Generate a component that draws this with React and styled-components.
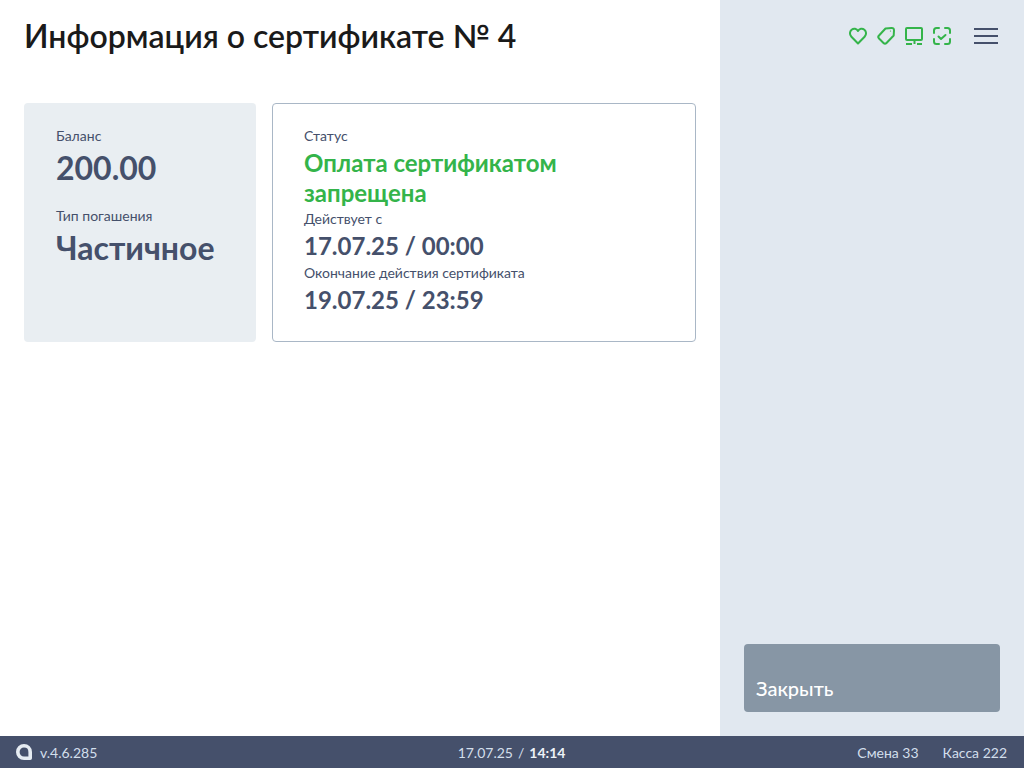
import React from "react";
import styled, { createGlobalStyle } from "styled-components";

const GlobalStyle = createGlobalStyle`
  html, body {
    margin: 0;
    padding: 0;
    height: 100%;
    background: #fff;
    font-family: Lato, "Noto Sans", sans-serif;
  }
  * { box-sizing: border-box; }
`;

const Screen = styled.div`
  display: flex;
  flex-direction: column;
  width: 1024px;
  height: 768px;
  overflow: hidden;
`;

const Body = styled.div`
  display: flex;
  flex: 1;
  min-height: 0;
`;

const Main = styled.main`
  width: 720px;
  padding: 16px 24px 0;
`;

const Title = styled.h1`
  margin: 0;
  height: 39px;
  font-size: 32px;
  line-height: 39px;
  font-weight: 600;
  color: #1a1a1a;
`;

const Cards = styled.div`
  display: flex;
  gap: 16px;
  margin-top: 48px;
  height: 239px;
`;

const BalanceCard = styled.section`
  width: 232px;
  padding: 24px 32px;
  background: #e9eef2;
  border-radius: 4px;
`;

const StatusCard = styled.section`
  width: 424px;
  padding: 23px 31px;
  background: #fff;
  border: 1px solid #a9b7c6;
  border-radius: 4px;
`;

const Label = styled.div`
  font-size: 14px;
  line-height: 18px;
  color: #45506b;
`;

const BigValue = styled.div`
  font-size: 32px;
  line-height: 46px;
  font-weight: 700;
  color: #45506b;
  margin-bottom: ${(p) => p.$gap || 0}px;
`;

const Value = styled.div`
  font-size: 24px;
  line-height: 36px;
  font-weight: 700;
  color: #45506b;
`;

const StatusValue = styled.div`
  padding: 3px 0 2px;
  font-size: 24px;
  line-height: 30px;
  font-weight: 700;
  color: #34b44a;
`;

const Side = styled.aside`
  display: flex;
  flex-direction: column;
  justify-content: space-between;
  width: 304px;
  padding: 24px 26px 24px 24px;
  background: #e1e8f0;
`;

const TopIcons = styled.div`
  display: flex;
  align-items: center;
  justify-content: flex-end;
  height: 24px;
`;

const StatusIcons = styled.div`
  display: flex;
  gap: 8px;
  margin-right: 22px;
  color: #34b44a;
  svg { display: block; }
`;

const Burger = styled.div`
  display: flex;
  flex-direction: column;
  justify-content: space-between;
  width: 24px;
  height: 16px;
  span {
    height: 2px;
    background: #45506b;
  }
`;

const CloseButton = styled.button`
  display: flex;
  align-items: flex-end;
  width: 256px;
  height: 68px;
  padding: 0 12px 12px;
  border: 0;
  border-radius: 4px;
  background: #8796a5;
  color: #fff;
  font-family: inherit;
  font-size: 20px;
  line-height: 24px;
  font-weight: 500;
  text-align: left;
`;

const Footer = styled.footer`
  display: grid;
  grid-template-columns: 1fr auto 1fr;
  align-items: center;
  height: 32px;
  padding: 0 17px 0 16px;
  background: #45506b;
  color: #d3dfec;
  font-size: 14px;
`;

const Version = styled.div`
  display: flex;
  align-items: center;
  gap: 8px;
`;

const Center = styled.div`
  display: flex;
  b { font-weight: 700; color: #eef3f8; }
`;

const Slash = styled.span`
  margin: 0 5px;
`;

const Right = styled.div`
  display: flex;
  justify-content: flex-end;
  gap: 24px;
`;

const Icon = ({ children }) => (
  <svg width="20" height="20" viewBox="0 0 20 20" fill="none" stroke="currentColor" strokeWidth="2" strokeLinecap="round" strokeLinejoin="round">
    {children}
  </svg>
);

export default function App() {
  return (
    <Screen>
      <GlobalStyle />
      <Body>
        <Main>
          <Title>Информация о сертификате № 4</Title>
          <Cards>
            <BalanceCard>
              <Label>Баланс</Label>
              <BigValue $gap={16}>200.00</BigValue>
              <Label>Тип погашения</Label>
              <BigValue>Частичное</BigValue>
            </BalanceCard>
            <StatusCard>
              <Label>Статус</Label>
              <StatusValue>Оплата сертификатом запрещена</StatusValue>
              <Label>Действует с</Label>
              <Value>17.07.25 / 00:00</Value>
              <Label>Окончание действия сертификата</Label>
              <Value>19.07.25 / 23:59</Value>
            </StatusCard>
          </Cards>
        </Main>
        <Side>
          <TopIcons>
            <StatusIcons>
              <Icon>
                <path d="M10 17.5 L3.4 10.8 C1.3 8.6 1.6 5.4 3.6 3.7 C5.8 2 8.6 2.6 10 5 C11.4 2.6 14.2 2 16.4 3.7 C18.4 5.4 18.7 8.6 16.6 10.8 Z" />
              </Icon>
              <Icon>
                <path d="M9.5 2.5 L15.5 2 C17.2 1.9 18.1 2.8 18 4.5 L17.7 9.5 L10.5 17 C9.5 18 8.5 18 7.5 17 L3 12.5 C2 11.5 2 10.5 3 9.5 Z" />
                <path d="M14.5 5 L14.5 5" strokeWidth="1.2" />
              </Icon>
              <Icon>
                <rect x="2" y="2" width="16" height="12" rx="1" />
                <path d="M10.5 14 V18 M2 18 H8 M13 18 H18" strokeLinecap="butt" />
              </Icon>
              <Icon>
                <path d="M7 2 H4.5 C3 2 2 3 2 4.5 V7 M13 2 H15.5 C17 2 18 3 18 4.5 V7 M2 13 V15.5 C2 17 3 18 4.5 18 H7 M18 13 V15.5 C18 17 17 18 15.5 18 H13" />
                <path d="M6.5 10.5 L9 13 L13.5 9" />
              </Icon>
            </StatusIcons>
            <Burger>
              <span />
              <span />
              <span />
            </Burger>
          </TopIcons>
          <CloseButton>Закрыть</CloseButton>
        </Side>
      </Body>
      <Footer>
        <Version>
          <svg width="16" height="16" viewBox="0 0 16 16" fill="none" stroke="#e6ecf2" strokeWidth="3.6" strokeLinejoin="round">
            <path d="M14.2 14.2 H8 C4.5 14.2 1.8 11.5 1.8 8 C1.8 4.5 4.5 1.8 8 1.8 C11.5 1.8 14.2 4.5 14.2 8 Z" />
          </svg>
          v.4.6.285
        </Version>
        <Center>
          <span>17.07.25</span>
          <Slash>/</Slash>
          <b>14:14</b>
        </Center>
        <Right>
          <span>Смена 33</span>
          <span>Касса 222</span>
        </Right>
      </Footer>
    </Screen>
  );
}
